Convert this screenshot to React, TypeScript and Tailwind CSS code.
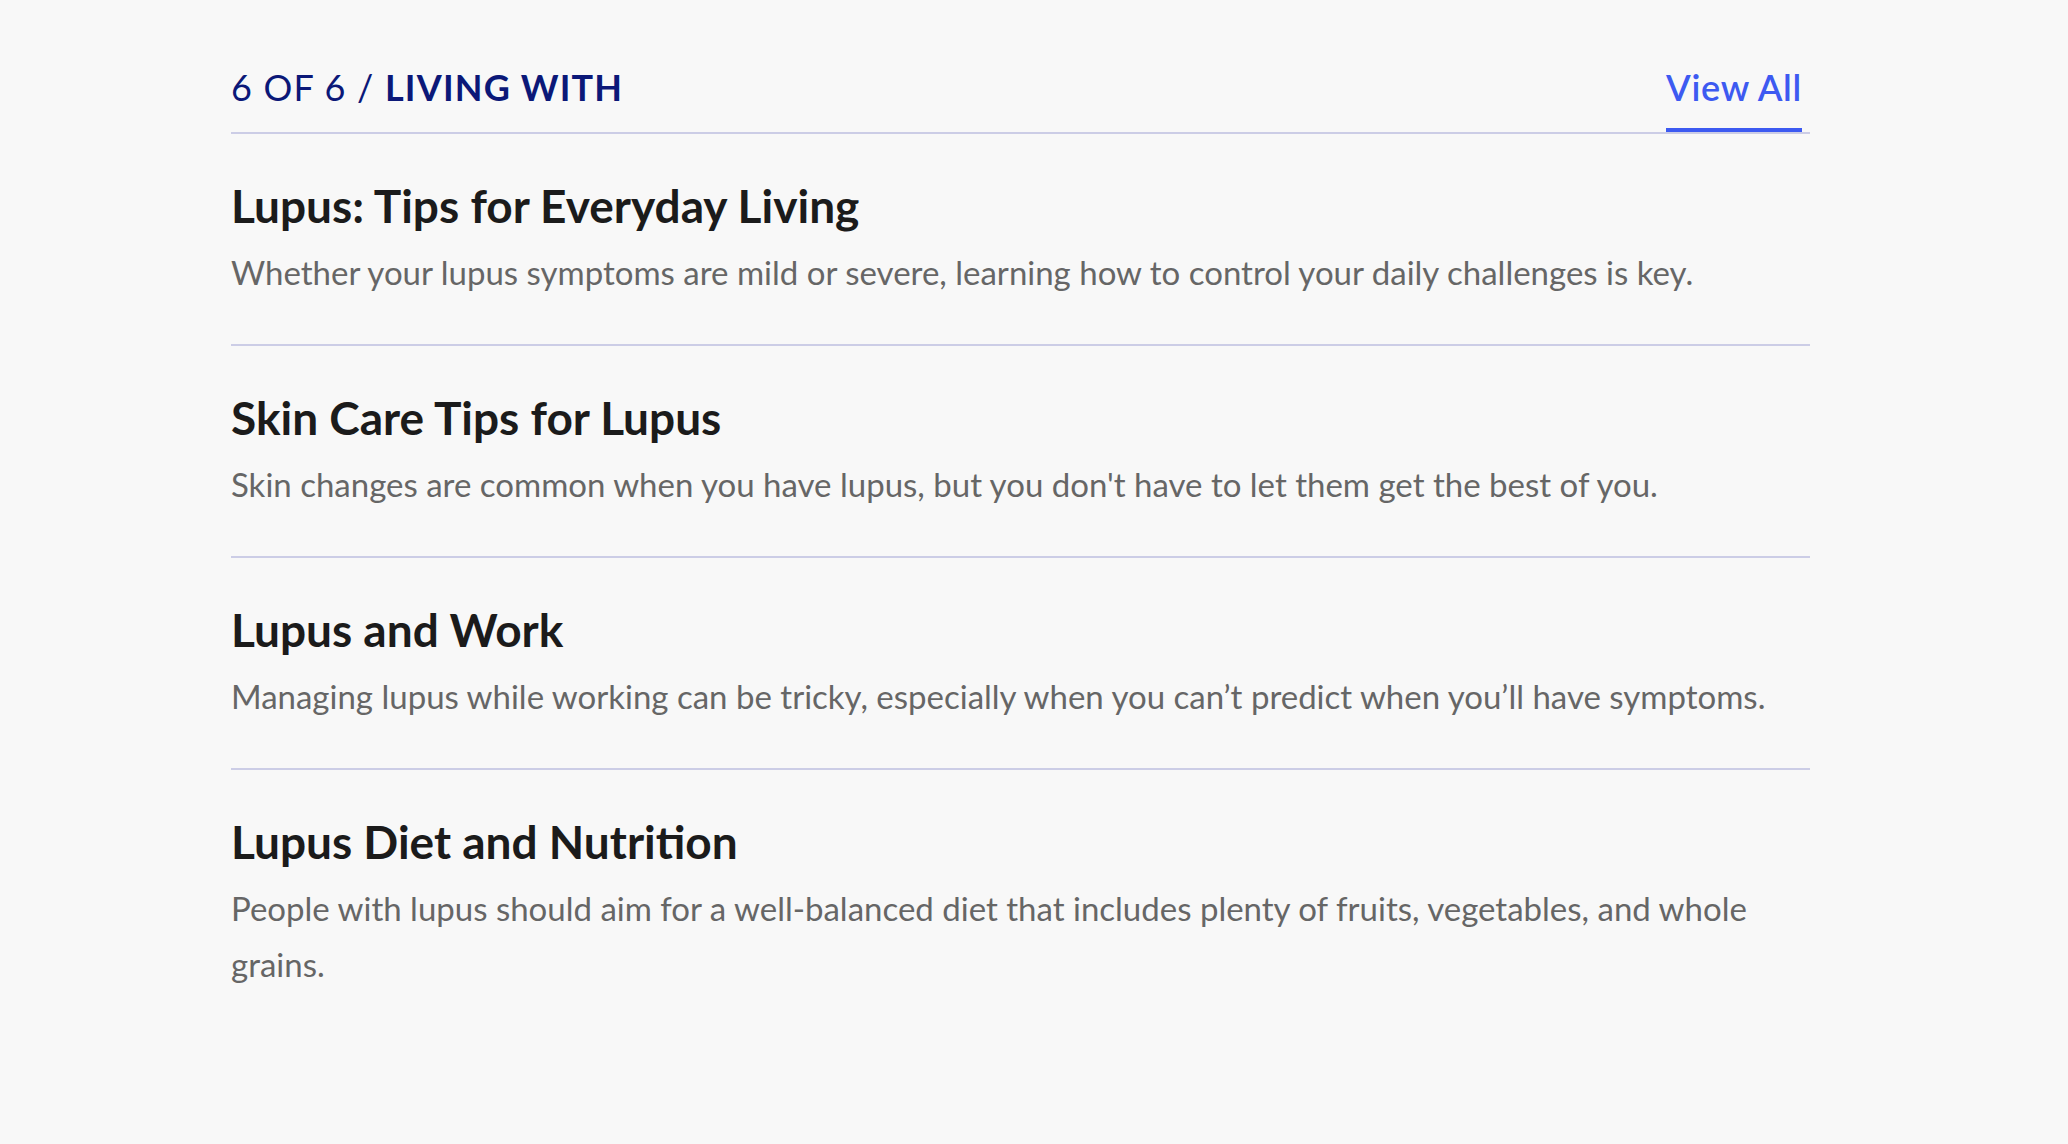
import React from "react";

const items = [
  {
    title: "Lupus: Tips for Everyday Living",
    desc: "Whether your lupus symptoms are mild or severe, learning how to control your daily challenges is key.",
  },
  {
    title: "Skin Care Tips for Lupus",
    desc: "Skin changes are common when you have lupus, but you don't have to let them get the best of you.",
  },
  {
    title: "Lupus and Work",
    desc: "Managing lupus while working can be tricky, especially when you can\u2019t predict when you\u2019ll have symptoms.",
  },
  {
    title: "Lupus Diet and Nutrition",
    desc: "People with lupus should aim for a well-balanced diet that includes plenty of fruits, vegetables, and whole grains.",
  },
];

export default function App() {
  return (
    <div className="min-h-[1144px] w-full bg-[#f8f8f8] pl-[231px] pt-[63px] font-['Lato',sans-serif]">
      <div className="w-[1579px]">
        <div className="flex items-end justify-between border-b-2 border-[#cccde6]">
          <div className="pb-[21px] text-[36px] leading-[48px] tracking-[0.033em] text-[#0b1878]">
            <span>6 OF 6 / </span>
            <span className="font-bold">LIVING WITH</span>
          </div>
          <a className="mr-[8px] border-b-4 border-[#3d5af1] pb-[17px] text-[36px] font-semibold leading-[48px] tracking-[0.02em] text-[#3d5af1]">
            View All
          </a>
        </div>
        {items.map((it, i) => (
          <div
            key={i}
            className={
              i < items.length - 1
                ? "border-b-2 border-[#cccde6] pb-[44px] pt-[44px]"
                : "pb-[44px] pt-[44px]"
            }
          >
            <h2 className="text-[46px] font-bold leading-[56px] text-[#1b1b1b]">{it.title}</h2>
            <p className="mt-[10px] pr-[40px] text-[33px] leading-[56px] text-[#666666]">{it.desc}</p>
          </div>
        ))}
      </div>
    </div>
  );
}
